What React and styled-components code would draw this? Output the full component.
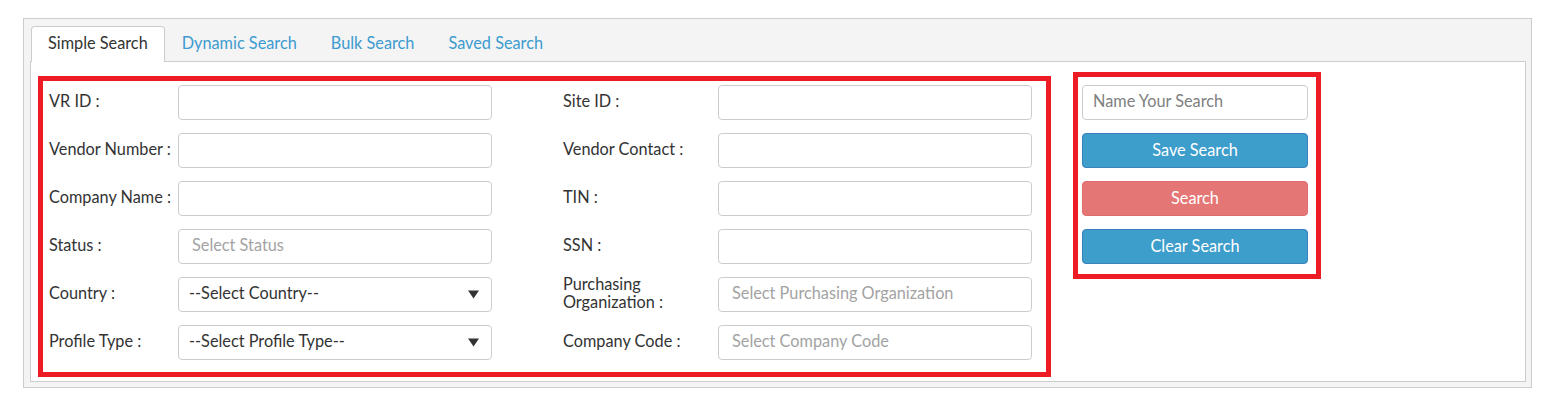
import styled, { createGlobalStyle } from 'styled-components';

const GlobalStyle = createGlobalStyle`
  *, *::before, *::after {
    box-sizing: border-box;
  }

  body {
    margin: 0;
    background: #fff;
    font-family: Lato, 'Open Sans', Arial, sans-serif;
    font-size: 16.3px;
    color: #333;
  }
`;

const Page = styled.div`
  padding: 18px 13px 0 23px;
`;

const TabsFrame = styled.div`
  background-color: #f4f4f4;
  border: 1px solid #cccccc;
  padding: 7px 5px 5px 6px;
`;

const TabList = styled.div`
  display: flex;
  align-items: flex-start;
  padding-left: 1px;
  position: relative;
  z-index: 1;
`;

const Tab = styled.div`
  height: 36px;
  line-height: 31px;
  padding: 0 16px;
  border: 1px solid transparent;
  border-bottom: none;
  border-radius: 4px 4px 0 0;
  margin-bottom: -1px;
  color: #3c9bd0;
  white-space: nowrap;
  cursor: pointer;

  &.active {
    color: #333;
    background-color: #fff;
    border-color: #cccccc;
  }
`;

const Panel = styled.div`
  background-color: #fff;
  border: 1px solid #cccccc;
  display: flex;
  align-items: flex-start;
  gap: 22px;
  padding: 10px 0 4px 7px;
`;

const Highlight = styled.div`
  border: 5px solid #ed1c24;
  margin-top: ${(p) => p.$offset || 0}px;
`;

const FieldArea = styled.div`
  display: flex;
  gap: 71px;
  padding: 4px 14px 12px 6px;
`;

const FieldColumn = styled.div`
  display: flex;
  flex-direction: column;
  gap: 13px;
`;

const FieldRow = styled.div`
  display: grid;
  grid-template-columns: ${(p) => p.$labelWidth}px 314px;
  grid-template-rows: 35px;
  align-items: center;
`;

const Label = styled.label`
  line-height: 18px;
  padding-bottom: 4px;
  color: #333;
`;

const TextInput = styled.input`
  height: 35px;
  width: 100%;
  border: 1px solid #cccccc;
  border-radius: 4px;
  padding: 0 ${(p) => p.$pad || 12}px 4px;
  font-family: inherit;
  font-size: 16.3px;
  color: #333;
  background: #fff;
  outline: none;

  &::placeholder {
    color: ${(p) => p.$muted || '#a3a3a3'};
  }
`;

const SelectBox = styled.div`
  height: 35px;
  border: 1px solid #cccccc;
  border-radius: 4px;
  padding: 0 12px 0 10px;
  display: flex;
  align-items: center;
  justify-content: space-between;
  color: #333;
  background: #fff;
  cursor: pointer;

  span {
    padding-bottom: 4px;
  }
`;

const ActionArea = styled.div`
  width: 238px;
  display: flex;
  flex-direction: column;
  gap: 13px;
  padding: 8px 8px 10px 4px;
`;

const ActionButton = styled.button`
  height: 35px;
  padding: 0 0 3px;
  border-radius: 4px;
  border: 1px solid ${(p) => (p.$tone === 'danger' ? '#e06d6d' : '#3a82bd')};
  background-color: ${(p) => (p.$tone === 'danger' ? '#e57676' : '#3d9dcb')};
  color: #fff;
  font-family: inherit;
  font-size: 16.3px;
  cursor: pointer;
`;

const Caret = () => (
  <svg width="11" height="9" viewBox="0 0 11 9">
    <path d="M0 0.5 H11 L5.5 8.5 Z" fill="#333" />
  </svg>
);

function Field({ label, labelWidth, children }) {
  return (
    <FieldRow $labelWidth={labelWidth}>
      <Label>{label}</Label>
      {children}
    </FieldRow>
  );
}

const tabs = ['Simple Search', 'Dynamic Search', 'Bulk Search', 'Saved Search'];

export default function App() {
  return (
    <Page>
      <GlobalStyle />
      <TabsFrame>
        <TabList>
          {tabs.map((t, i) => (
            <Tab key={t} className={i === 0 ? 'active' : ''}>
              {t}
            </Tab>
          ))}
        </TabList>
        <Panel>
          <Highlight $offset={4}>
            <FieldArea>
              <FieldColumn>
                <Field label='VR ID :' labelWidth={129}>
                  <TextInput />
                </Field>
                <Field label='Vendor Number :' labelWidth={129}>
                  <TextInput />
                </Field>
                <Field label='Company Name :' labelWidth={129}>
                  <TextInput />
                </Field>
                <Field label='Status :' labelWidth={129}>
                  <TextInput placeholder='Select Status' $pad={13} />
                </Field>
                <Field label='Country :' labelWidth={129}>
                  <SelectBox>
                    <span>--Select Country--</span>
                    <Caret />
                  </SelectBox>
                </Field>
                <Field label='Profile Type :' labelWidth={129}>
                  <SelectBox>
                    <span>--Select Profile Type--</span>
                    <Caret />
                  </SelectBox>
                </Field>
              </FieldColumn>
              <FieldColumn>
                <Field label='Site ID :' labelWidth={155}>
                  <TextInput />
                </Field>
                <Field label='Vendor Contact :' labelWidth={155}>
                  <TextInput />
                </Field>
                <Field label='TIN :' labelWidth={155}>
                  <TextInput />
                </Field>
                <Field label='SSN :' labelWidth={155}>
                  <TextInput />
                </Field>
                <Field
                  label={
                    <>
                      Purchasing
                      <br />
                      Organization :
                    </>
                  }
                  labelWidth={155}
                >
                  <TextInput
                    placeholder='Select Purchasing Organization'
                    $pad={13}
                  />
                </Field>
                <Field label='Company Code :' labelWidth={155}>
                  <TextInput placeholder='Select Company Code' $pad={13} />
                </Field>
              </FieldColumn>
            </FieldArea>
          </Highlight>
          <Highlight>
            <ActionArea>
              <TextInput placeholder='Name Your Search' $pad={10} $muted='#808080' />
              <ActionButton>Save Search</ActionButton>
              <ActionButton $tone='danger'>Search</ActionButton>
              <ActionButton>Clear Search</ActionButton>
            </ActionArea>
          </Highlight>
        </Panel>
      </TabsFrame>
    </Page>
  );
}
